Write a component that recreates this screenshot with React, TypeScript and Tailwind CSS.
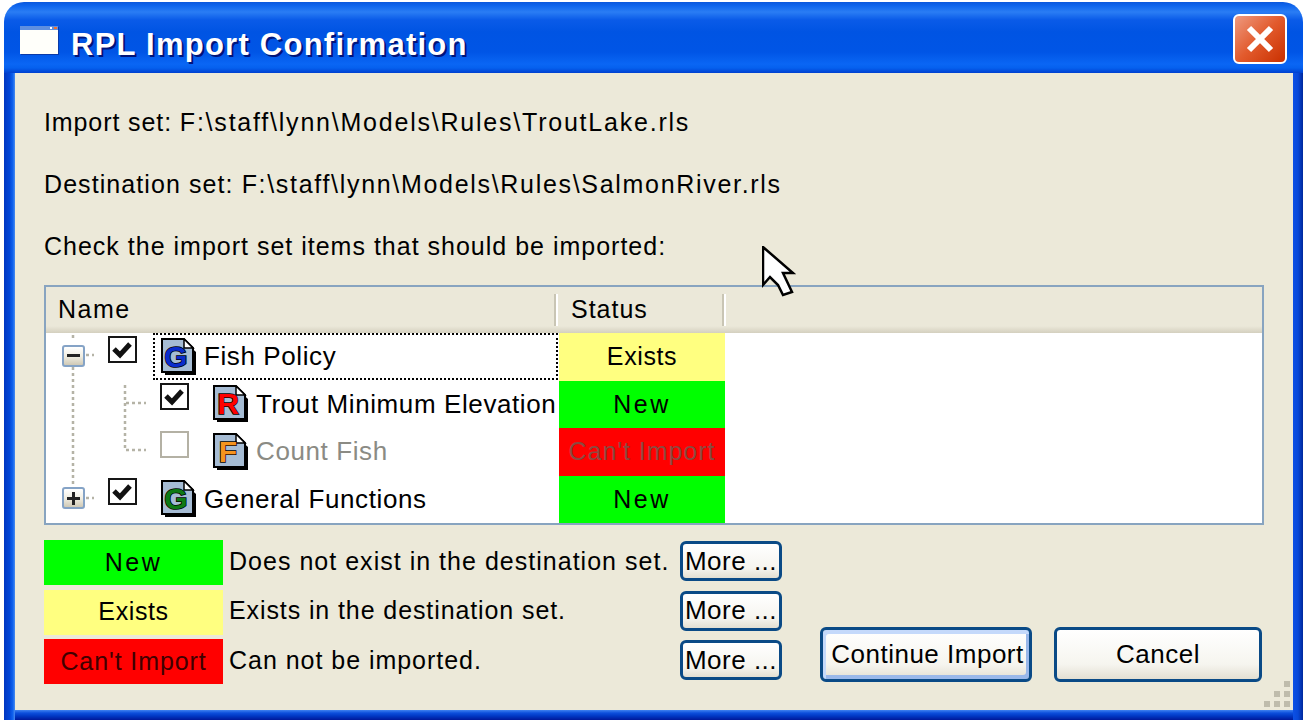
const font = { fontFamily: '"Liberation Sans", Arial, sans-serif' };

function DocIcon({ letter, color }: { letter: string; color: string }) {
  return (
    <svg width="36" height="38" viewBox="0 0 36 38" className="shrink-0">
      <path d="M4 4 H24 L35 14 V37 H4 Z" fill="#000" />
      <path d="M1 1 H23 L32 10 V34 H1 Z" fill="#a6bcd4" stroke="#000" strokeWidth="2" />
      <path d="M23 1 V10 H32 Z" fill="#fff" stroke="#000" strokeWidth="1.5" />
      <text x="15" y="29" textAnchor="middle" fontSize="30" fontWeight="700" fontFamily="Liberation Sans" fill={color} stroke="#000" strokeWidth="1.5" paintOrder="stroke">
        {letter}
      </text>
    </svg>
  );
}

function Check({ checked = true, disabled = false }: { checked?: boolean; disabled?: boolean }) {
  return (
    <div className={`w-[29px] h-[27px] shrink-0 bg-white border-[2px] ${disabled ? "border-[#b4b1a4]" : "border-[#161616]"}`}>
      {checked && (
        <svg width="25" height="23" viewBox="0 0 25 23">
          <path d="M4 11 L10 17 L20 6" fill="none" stroke="#111" strokeWidth="5" />
        </svg>
      )}
    </div>
  );
}

function Expander({ open }: { open: boolean }) {
  return (
    <div className="relative w-[23px] h-[22px] rounded-[3px] border-[2px] border-[#85a3c6] bg-[linear-gradient(to_bottom,#ffffff,#f1eee2_50%,#cfc9b6)] flex items-center justify-center">
      <div className="w-[13px] h-[3px] bg-[#222]" />
      {!open && <div className="absolute w-[3px] h-[13px] bg-[#222]" />}
    </div>
  );
}

function TreeRow({
  slot,
  letter,
  color,
  label,
  status,
  statusClass,
  disabled,
  expander,
}: {
  slot: string;
  letter: string;
  color: string;
  label: string;
  status: string;
  statusClass: string;
  disabled?: boolean;
  expander?: boolean;
}) {
  return (
    <div className="flex h-[47.5px]">
      <div className="relative w-[513px] shrink-0 flex items-center overflow-hidden">
        <div className={`${slot} shrink-0 h-full flex items-center`}>
          {expander !== undefined && (
            <div className="ml-[16px] mt-[-2px]">
              <Expander open={expander} />
            </div>
          )}
        </div>
        <div className="mt-[-15px] mr-[24px]">
          <Check checked={!disabled} disabled={disabled} />
        </div>
        <DocIcon letter={letter} color={color} />
        <span className={`ml-[7px] text-[26px] tracking-[0.6px] whitespace-nowrap ${disabled ? "text-[#8b8b84]" : "text-black"}`}>{label}</span>
      </div>
      <div className={`w-[166px] shrink-0 flex items-center justify-center text-[25px] ${statusClass}`}>{status}</div>
    </div>
  );
}

function XpButton({ className, label, primary }: { className: string; label: string; primary?: boolean }) {
  return (
    <button
      className={`${className} shrink-0 rounded-[6px] border-[3px] border-[#0a4a86] bg-[linear-gradient(to_bottom,#ffffff,#f6f5ef_70%,#e3dfd2)] text-black text-[26px] tracking-[0.5px] whitespace-nowrap flex items-center justify-center ${
        primary ? "pl-[3px] shadow-[inset_3px_4px_0_#c4d9fb,inset_-3px_-4px_0_#9ab8ea]" : ""
      }`}
    >
      {label}
    </button>
  );
}

function LegendRow({ swatch, swatchClass, text, textClass }: { swatch: string; swatchClass: string; text: string; textClass: string }) {
  return (
    <div className="flex items-center h-[45px]">
      <div className={`w-[179px] h-full flex items-center justify-center text-[25px] ${swatchClass}`}>{swatch}</div>
      <div className={`w-[457px] pl-[6px] text-[25px] text-black whitespace-nowrap mt-[-2px] ${textClass}`}>{text}</div>
      <XpButton className="w-[102px] h-[40px] mt-[-3px]" label="More ..." />
    </div>
  );
}

export default function App() {
  return (
    <div style={font} className="relative w-[1309px] h-[724px] bg-white overflow-hidden pl-[4px] pt-[2px]">
      <div className="w-[1299px] h-[718px] flex flex-col rounded-t-[20px] overflow-hidden">
        {/* title bar */}
        <div className="h-[71px] shrink-0 flex items-center pt-[6px] pl-[16px] pr-[6px] bg-[linear-gradient(to_bottom,#0a57dc_0px,#0f66ee_4px,#2a7df4_10px,#0a5be8_18px,#0054e3_30px,#0055e6_50px,#0a66f4_62px,#0560ee_66px,#0040d0_71px)]">
          <svg width="40" height="30" viewBox="0 0 40 30" className="shrink-0">
            <rect x="1" y="1" width="38" height="28" fill="#0a3aa8" />
            <rect x="0" y="0" width="38" height="4" fill="#5f8fe0" />
            <rect x="30" y="1" width="2" height="2" fill="#fff" />
            <rect x="34" y="1" width="3" height="2" fill="#f07030" />
            <rect x="0" y="4" width="38" height="24" fill="#fffffa" />
          </svg>
          <span className="ml-[11px] mt-[10px] text-white text-[31px] font-bold tracking-[1.25px] [text-shadow:2px_2px_0_#00147a] whitespace-nowrap">RPL Import Confirmation</span>
          <div className="ml-auto mr-[10px] w-[54px] h-[50px] rounded-[6px] border-[2px] border-white bg-[linear-gradient(135deg,#ee9a80,#e25a2c_50%,#c93000)] flex items-center justify-center mt-[-3px]">
            <svg width="32" height="30" viewBox="0 0 32 30">
              <path d="M5 4 L27 26 M27 4 L5 26" stroke="#fff" strokeWidth="6" />
            </svg>
          </div>
        </div>

        <div className="flex flex-1 min-h-0">
          <div className="w-[11px] shrink-0 bg-[linear-gradient(to_right,#0036c0,#0045d8_50%,#0f62ee_80%,#4a8cf0)]" />
          <div className="flex-1 min-w-0 flex flex-col">
            {/* dialog body */}
            <div className="relative h-[637px] shrink-0 bg-[#ece9d9] pl-[29px] pt-[19px]">
              <div className="h-[62px] flex items-center text-[25px] text-black whitespace-pre">
                <span className="tracking-[0.9px]">Import set: </span>
                <span className="tracking-[1.78px]">F:\staff\lynn\Models\Rules\TroutLake.rls</span>
              </div>
              <div className="h-[62px] flex items-center text-[25px] text-black whitespace-pre">
                <span className="tracking-[1.08px]">Destination set: </span>
                <span className="tracking-[1.69px]">F:\staff\lynn\Models\Rules\SalmonRiver.rls</span>
              </div>
              <div className="h-[61px] flex items-center text-[25px] tracking-[1px] text-black">Check the import set items that should be imported:</div>

              {/* tree list */}
              <div className="relative mt-[8px] w-[1220px] h-[240px] border-[2px] border-[#88a4c0] bg-white">
                <div className="h-[46px] flex bg-[linear-gradient(to_bottom,#ebe8d9_85%,#d4d0bf)] text-[25px] text-black">
                  <div className="w-[508px] pl-[12px] flex items-center tracking-[1.5px]">Name</div>
                  <div className="w-[2px] h-[32px] mt-[7px] bg-[#c9c5b4]" />
                  <div className="w-[2px] h-[32px] mt-[7px] bg-white" />
                  <div className="w-[164px] pl-[13px] flex items-center tracking-[1px]">Status</div>
                  <div className="w-[2px] h-[32px] mt-[7px] bg-[#c9c5b4]" />
                  <div className="w-[2px] h-[32px] mt-[7px] bg-white" />
                </div>
                <TreeRow slot="w-[62px]" expander={true} letter="G" color="#0a2ccc" label="Fish Policy" status="Exists" statusClass="bg-[#ffff80] text-black tracking-[0.6px]" />
                <TreeRow slot="w-[114px]" letter="R" color="#ff0000" label="Trout Minimum Elevation" status="New" statusClass="bg-[#00ff00] text-black tracking-[2.5px]" />
                <TreeRow slot="w-[114px]" letter="F" color="#f5931f" label="Count Fish" status="Can't Import" statusClass="bg-[#ff0000] text-[#8a4a40] tracking-[0.95px]" disabled />
                <TreeRow slot="w-[62px]" expander={false} letter="G" color="#0e7a14" label="General Functions" status="New" statusClass="bg-[#00ff00] text-black tracking-[2.5px]" />

                {/* focus rectangle and tree connector lines */}
                <div className="absolute left-[107px] top-[46px] w-[405px] h-[47px] border-[2px] border-dotted border-black" />
                <svg className="absolute left-0 top-[46px] pointer-events-none" width="130" height="190">
                  <g stroke="#b5b3a6" strokeWidth="2.5" strokeDasharray="3 3" fill="none">
                    <path d="M27 2 V6 M27 34 V152" />
                    <path d="M40 22 H48 M40 165 H48" />
                    <path d="M79 52 V118 M80 70 H100 M80 117 H100" />
                  </g>
                </svg>
              </div>

              {/* legend and buttons */}
              <div className="flex mt-[15px]">
                <div className="flex flex-col gap-[4.5px]">
                  <LegendRow swatch="New" swatchClass="bg-[#00ff00] text-black tracking-[2.5px]" text="Does not exist in the destination set." textClass="tracking-[1.02px]" />
                  <LegendRow swatch="Exists" swatchClass="bg-[#ffff80] text-black tracking-[0.6px]" text="Exists in the destination set." textClass="tracking-[0.9px]" />
                  <LegendRow swatch="Can't Import" swatchClass="bg-[#ff0000] text-[#400000] tracking-[0.9px]" text="Can not be imported." textClass="tracking-[0.97px]" />
                </div>
                <div className="flex items-end gap-[22px] ml-[38px] pb-[2px]">
                  <XpButton className="w-[212px] h-[55px]" label="Continue Import" primary />
                  <XpButton className="w-[208px] h-[55px]" label="Cancel" />
                </div>
              </div>

              {/* size grip */}
              <svg className="absolute right-[3px] bottom-[3px]" width="26" height="26" viewBox="0 0 26 26">
                <g fill="#bfbcac">
                  <rect x="20" y="0" width="6" height="6" />
                  <rect x="10" y="10" width="6" height="6" />
                  <rect x="20" y="10" width="6" height="6" />
                  <rect x="0" y="20" width="6" height="6" />
                  <rect x="10" y="20" width="6" height="6" />
                  <rect x="20" y="20" width="6" height="6" />
                </g>
              </svg>
            </div>
            <div className="flex-1 bg-[linear-gradient(to_bottom,#3f82f0,#0c4fdc_30%,#0038c4_60%,#00189a)]" />
          </div>
          <div className="w-[10px] shrink-0 bg-[linear-gradient(to_right,#0c50e6,#0848d8_50%,#00289c)]" />
        </div>
      </div>

      {/* mouse pointer */}
      <svg className="absolute left-[762px] top-[246px]" width="34" height="52" viewBox="0 0 34 52">
        <path d="M1 1 V39 L8 31 L16 39 L21 49 L30 46 L21 27 H31 Z" fill="#fff" stroke="#000" strokeWidth="2.5" strokeLinejoin="miter" />
      </svg>
    </div>
  );
}
